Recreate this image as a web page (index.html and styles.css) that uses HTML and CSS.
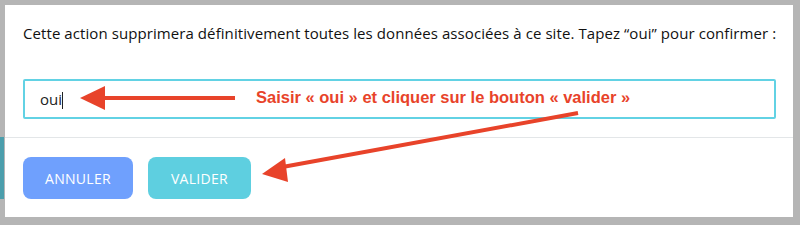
FILE: index.html
```html
<!DOCTYPE html>
<html lang="fr">
<head>
    <meta charset="UTF-8">
    <title>Supprimer le site</title>
    <link rel="stylesheet" href="styles.css">
</head>
<body>
    <div class="modal">
        <div class="modal-body">
            <p class="message">Cette action supprimera définitivement toutes les données associées à ce site. Tapez “oui” pour confirmer :</p>
            <div class="field">oui<span class="caret"></span></div>
        </div>
        <div class="modal-footer">
            <button class="btn btn-cancel">ANNULER</button>
            <button class="btn btn-ok">VALIDER</button>
        </div>

        <!-- annotations drawn on top of the screenshot -->
        <svg class="notes" width="788" height="212" viewBox="0 0 788 212">
            <line x1="98" y1="93" x2="230" y2="93" stroke="#e8432a" stroke-width="4"/>
            <polygon points="75,93 100,81 100,105" fill="#e8432a"/>
            <line x1="573" y1="108" x2="272" y2="163" stroke="#e8432a" stroke-width="4"/>
            <polygon points="257,169 280,153 283,177" fill="#e8432a"/>
        </svg>
        <div class="note-text">Saisir « oui » et cliquer sur le bouton « valider »</div>
    </div>
</body>
</html>
```

FILE: styles.css
```css
body {
    margin: 0;
    height: 225px;
    overflow: hidden;
    background: linear-gradient(#4b9eac, #4b9eac) 0 137px / 4px 62px no-repeat, #b5b5b5;
    font-family: "Open Sans", sans-serif;
}

.modal {
    position: relative;
    margin: 5px 7px 0 5px;
    height: 212px;
    background: #fff;
}

.modal-body {
    padding: 18px 17px 18px 18px;
}

.message {
    margin: 0;
    font-size: 15px;
    line-height: 20px;
    letter-spacing: 0.08px;
    white-space: nowrap;
    color: #111;
}

.field {
    margin-top: 36px;
    height: 36px;
    border: 2px solid #62d2e4;
    border-radius: 2px;
    padding: 0 0 0 15px;
    font-size: 15px;
    line-height: 36px;
    color: #222;
}

.caret {
    display: inline-block;
    width: 1px;
    height: 17px;
    background: #222;
    vertical-align: -4px;
}

.modal-footer {
    display: flex;
    gap: 15px;
    border-top: 1px solid #e3e6e8;
    padding: 19px 18px 17px;
}

.btn {
    height: 42px;
    border: none;
    border-radius: 8px;
    color: #fff;
    font-family: "Open Sans", sans-serif;
    font-size: 14px;
    letter-spacing: 0.3px;
}

.btn-cancel {
    width: 110px;
    background: #6fa0fd;
}

.btn-ok {
    width: 103px;
    background: #5ecfe0;
}

.notes {
    position: absolute;
    left: 0;
    top: 0;
}

.note-text {
    position: absolute;
    left: 251px;
    top: 83px;
    font-family: "Liberation Sans", Arial, sans-serif;
    font-weight: bold;
    font-size: 16.5px;
    color: #e8432a;
}
```
